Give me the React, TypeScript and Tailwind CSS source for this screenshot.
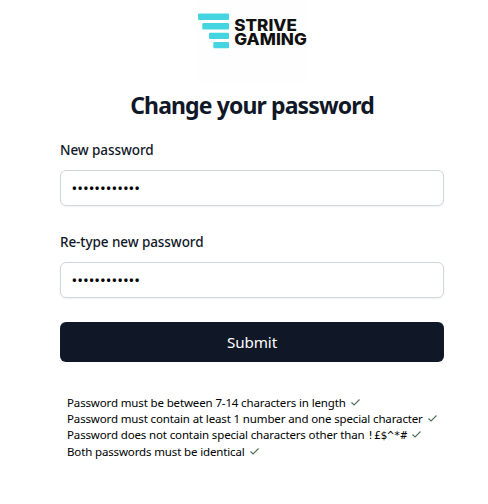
import React from "react";

function Logo() {
  return (
    <svg className="h-[84px] w-[110px]" viewBox="0 0 110 84" role="img" aria-label="Strive Gaming">
      <rect width="110" height="84" fill="#fefefe" />
      <g fill="#45d5e0">
        <rect x="1" y="13.5" width="31" height="6.5" rx="1" />
        <rect x="5.3" y="23" width="26.7" height="6.5" rx="1" />
        <rect x="12" y="32.7" width="20" height="6.3" rx="1" />
        <rect x="16.3" y="42" width="15.7" height="6.3" rx="1" />
      </g>
      <g fill="#111" fontFamily="Inter, sans-serif" fontWeight="800" fontSize="16">
        <text x="37.3" y="31.2" textLength="62.5" lengthAdjust="spacingAndGlyphs">STRIVE</text>
        <text x="37.3" y="45.2" textLength="72.5" lengthAdjust="spacingAndGlyphs">GAMING</text>
      </g>
    </svg>
  );
}

function Field({ id, label }: { id: string; label: string }) {
  return (
    <div className="flex flex-col gap-[10px]">
      <label htmlFor={id} className="text-[13.5px] leading-5 font-medium tracking-[-0.08px]">{label}</label>
      <input
        id={id}
        type="password"
        defaultValue="Abcdefg123!$"
        className="h-9 w-full rounded-md border border-gray-300 bg-white pr-3 pl-[10.5px] text-[15.2px] text-black shadow-xs"
      />
    </div>
  );
}

function Check() {
  return (
    <svg className="relative -top-px ml-[5px] inline-block h-[7px] w-[9px] align-baseline" viewBox="0 0 9 7" fill="none" stroke="#50705a" strokeWidth="1.1">
      <path d="M0.5 3.5 L3.1 6 L8.5 0.5" />
    </svg>
  );
}

const rules = [
  { text: "Password must be between 7-14 characters in length" },
  { text: "Password must contain at least 1 number and one special character" },
  { text: "Password does not contain special characters other than ", symbols: "!£$^*#" },
  { text: "Both passwords must be identical" },
];

export default function App() {
  return (
    <main className="flex h-[504px] w-[488px] flex-col bg-white pr-11 pl-[60px] font-['Noto_Sans','Open_Sans',sans-serif] text-gray-900">
      <div className="flex justify-center"><Logo /></div>
      <h1 className="mt-[5px] text-center text-[23px] leading-8 font-bold tracking-[-0.88px] whitespace-nowrap">Change your password</h1>
      <form className="mt-[19px] flex flex-col gap-[26px]" onSubmit={(e) => e.preventDefault()}>
        <Field id="new-password" label="New password" />
        <Field id="retype-password" label="Re-type new password" />
        <button className="-mt-0.5 h-10 rounded-md bg-gray-900 text-[15.2px] tracking-[-0.1px] text-white">Submit</button>
      </form>
      <ul className="mt-[33px] pl-[7px] text-[11.5px] leading-4 whitespace-nowrap text-black">
        {rules.map((r) => (
          <li key={r.text} className="h-4 last:mt-px">
            <span className="tracking-[-0.14px]">{r.text}</span>
            {r.symbols && <span className="font-['DejaVu_Sans_Mono',monospace] text-[11px] leading-none">{r.symbols}</span>}
            <Check />
          </li>
        ))}
      </ul>
    </main>
  );
}
